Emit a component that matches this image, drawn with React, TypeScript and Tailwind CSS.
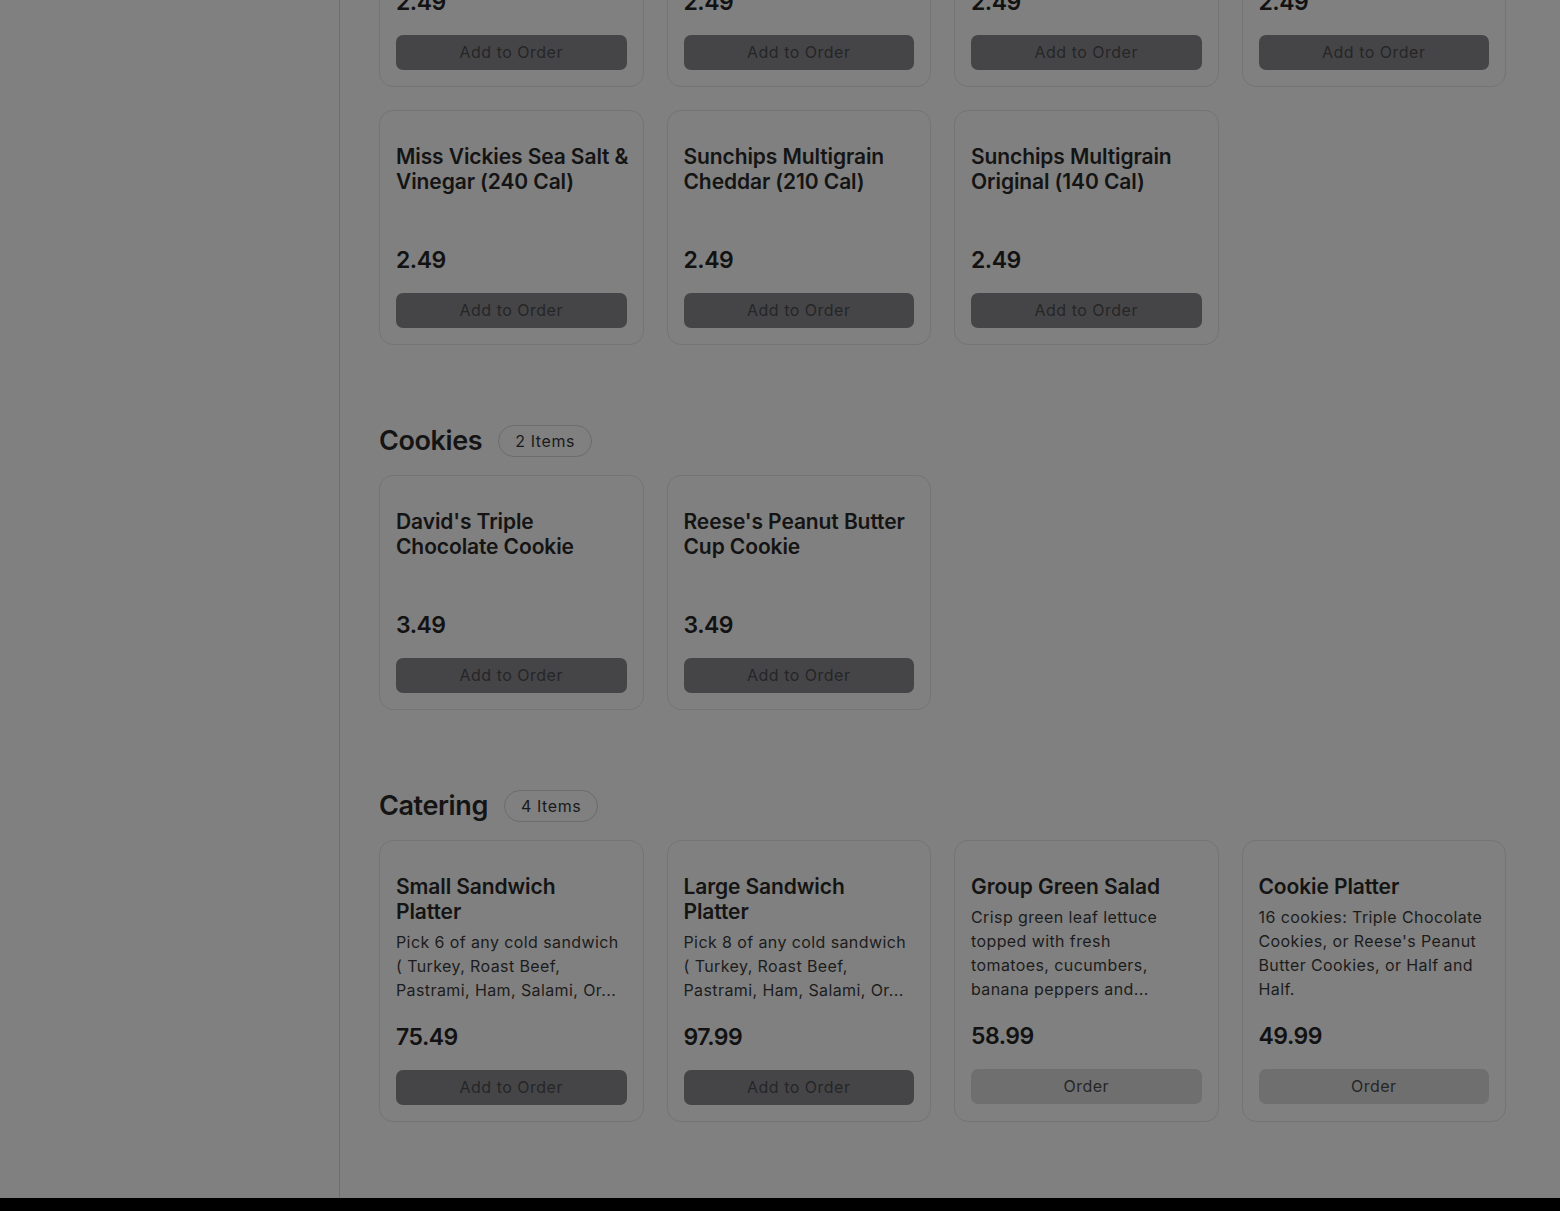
import React from "react";

type Item = { title: string; desc?: string; price: string; btn?: "add" | "order" };

const FONT = { fontFamily: "Inter, 'Open Sans', sans-serif" };

const row1: Item[] = [
  { title: "Lays Classic\n(230 Cal)", price: "2.49" },
  { title: "Lays Barbecue\n(230 Cal)", price: "2.49" },
  { title: "Doritos Nacho\nCheese (250 Cal)", price: "2.49" },
  { title: "Miss Vickies\nJalapeno (210 Cal)", price: "2.49" },
  { title: "Miss Vickies Sea Salt &\nVinegar (240 Cal)", price: "2.49" },
  { title: "Sunchips Multigrain\nCheddar (210 Cal)", price: "2.49" },
  { title: "Sunchips Multigrain\nOriginal (140 Cal)", price: "2.49" },
];

const cookies: Item[] = [
  { title: "David's Triple\nChocolate Cookie", price: "3.49" },
  { title: "Reese's Peanut Butter\nCup Cookie", price: "3.49" },
];

const catering: Item[] = [
  {
    title: "Small Sandwich\nPlatter",
    desc: "Pick 6 of any cold sandwich\n( Turkey, Roast Beef,\nPastrami, Ham, Salami, Or...",
    price: "75.49",
  },
  {
    title: "Large Sandwich\nPlatter",
    desc: "Pick 8 of any cold sandwich\n( Turkey, Roast Beef,\nPastrami, Ham, Salami, Or...",
    price: "97.99",
  },
  {
    title: "Group Green Salad",
    desc: "Crisp green leaf lettuce\ntopped with fresh\ntomatoes, cucumbers,\nbanana peppers and...",
    price: "58.99",
    btn: "order",
  },
  {
    title: "Cookie Platter",
    desc: "16 cookies: Triple Chocolate\nCookies, or Reese's Peanut\nButter Cookies, or Half and\nHalf.",
    price: "49.99",
    btn: "order",
  },
];

function Card({ item }: { item: Item }) {
  return (
    <div className="flex flex-col rounded-[14px] border border-[#747474] bg-[#808080] px-4 pt-[33px] pb-4">
      <div className="whitespace-pre text-[21px] font-semibold leading-[25px] tracking-[-0.1px] text-[#141414]">
        {item.title}
      </div>
      {item.desc ? (
        <div className="mt-[6px] whitespace-pre text-[16px] leading-[24px] tracking-[0.4px] text-[#1c1c1c]">
          {item.desc}
        </div>
      ) : (
        <div className="mt-[6px] h-[25px]" />
      )}
      <div className="mt-[20px] text-[23px] font-semibold leading-[30px] tracking-[-0.5px] text-[#121212]">
        {item.price}
      </div>
      <button
        className={
          "mt-[18px] h-[35px] w-full rounded-[7px] text-[16px] leading-[35px] tracking-[0.5px] " +
          (item.btn === "order" ? "bg-[#6f6f6f] text-[#262626]" : "bg-[#454548] text-[#262626]")
        }
      >
        {item.btn === "order" ? "Order" : "Add to Order"}
      </button>
    </div>
  );
}

function Section({ title, count, items }: { title: string; count: string; items: Item[] }) {
  return (
    <div className="mt-[76px]">
      <div className="flex h-[40px] items-center gap-[16px]">
        <h2 className="text-[27px] font-semibold tracking-[-0.4px] text-[#141414]">{title}</h2>
        <span className="flex h-[32px] items-center rounded-full border border-[#6c6c6c] px-[16px] text-[16px] tracking-[0.6px] text-[#1a1a1a]">
          {count}
        </span>
      </div>
      <div className="mt-[14px] grid grid-cols-4 gap-[23px]">
        {items.map((it, i) => (
          <Card key={i} item={it} />
        ))}
      </div>
    </div>
  );
}

export default function App() {
  return (
    <div className="h-[1211px] w-[1560px] overflow-hidden bg-black" style={FONT}>
      <div className="flex h-[1198px] bg-[#808080]">
        <aside className="w-[340px] shrink-0 border-r border-[#6e6e6e]" />
        <main className="flex-1 overflow-hidden pl-[39px] pr-[54px]">
          <div className="mt-[-148px] grid grid-cols-4 gap-[23px]">
            {row1.map((it, i) => (
              <Card key={i} item={it} />
            ))}
          </div>
          <Section title="Cookies" count="2 Items" items={cookies} />
          <Section title="Catering" count="4 Items" items={catering} />
        </main>
      </div>
    </div>
  );
}
